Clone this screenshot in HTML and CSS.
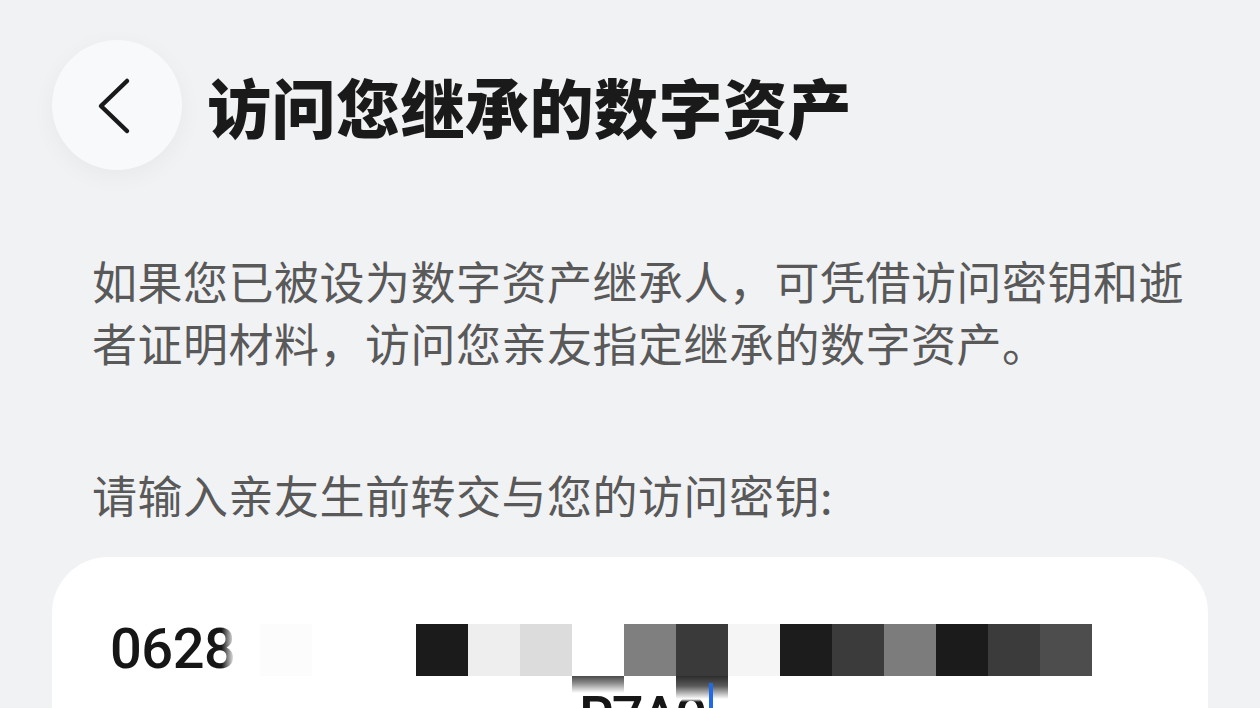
FILE: index.html
```html
<!DOCTYPE html>
<html lang="zh-CN">
<head>
<meta charset="utf-8">
<title>访问您继承的数字资产</title>
<link rel="stylesheet" href="styles.css">
</head>
<body>
<div class="page">
  <header class="header">
    <button class="back" aria-label="返回">
      <svg width="130" height="130" viewBox="0 0 130 130"><path d="M75 41 L49 66 L75 91" fill="none" stroke="#1a1a1a" stroke-width="4.5" stroke-linecap="round" stroke-linejoin="round"/></svg>
    </button>
    <h1 class="title">访问您继承的数字资产</h1>
  </header>
  <p class="desc">如果您已被设为数字资产继承人，可凭借访问密钥和逝者证明材料，访问您亲友指定继承的数字资产。</p>
  <p class="prompt">请输入亲友生前转交与您的访问密钥:</p>
  <div class="card">
    <div class="line">0628</div>
    <div class="line line2">R7A9<span class="cursor"></span></div>
    <div class="mosaic">
      <div class="mrow">
        <i class="c fade"></i><i class="c m1"></i><i class="c"></i><i class="c"></i>
        <i class="c k1b"></i><i class="c ee"></i><i class="c dc"></i><i class="c wh"></i>
        <i class="c g7f"></i><i class="c g3a"></i><i class="c f5"></i><i class="c k1c"></i>
        <i class="c g3b"></i><i class="c g7c"></i><i class="c k1b"></i><i class="c g3b"></i><i class="c g4d"></i>
      </div>
      <div class="mrow">
        <i class="c"></i><i class="c"></i><i class="c"></i><i class="c"></i>
        <i class="c"></i><i class="c"></i><i class="c"></i><i class="c gr1"></i>
        <i class="c"></i><i class="c gr2"></i>
      </div>
    </div>
  </div>
</div>
</body>
</html>
```
FILE: styles.css
```css
html, body {
  margin: 0;
  padding: 0;
}
body {
  background: #f1f2f4;
  width: 1260px;
  height: 708px;
  overflow: hidden;
  font-family: "Noto Sans CJK SC", "Noto Sans", sans-serif;
}
.page {
  display: flex;
  flex-direction: column;
}
.header {
  display: flex;
  align-items: center;
  gap: 25px;
  padding: 40px 0 0 52px;
}
.back {
  width: 130px;
  height: 130px;
  border-radius: 50%;
  border: none;
  padding: 0;
  background: #f8f9fa;
  box-shadow: 0 6px 24px rgba(0, 0, 0, 0.045);
  display: flex;
  align-items: center;
  justify-content: center;
}
.back svg {
  display: block;
}
.title {
  margin: 0;
  font-size: 64px;
  line-height: 1;
  font-weight: 900;
  color: #1a1a1a;
  letter-spacing: 0.5px;
}
.desc, .prompt {
  margin: 0 52px 0 92px;
  font-size: 45px;
  line-height: 62px;
  color: #595959;
  letter-spacing: 0.5px;
}
.desc {
  margin-top: 80px;
}
.prompt {
  margin-top: 90px;
}
.card {
  position: relative;
  margin: 31px 52px 0;
  height: 300px;
  background: #ffffff;
  border-radius: 56px;
  padding: 58px 0 0 58px;
  box-sizing: border-box;
}
.line {
  font-family: Roboto, "Noto Sans", sans-serif;
  font-size: 56px;
  font-weight: 500;
  line-height: 68px;
  color: #161616;
  letter-spacing: -0.5px;
  height: 68px;
}
.line2 {
  margin-left: 469px;
  display: flex;
  align-items: stretch;
  letter-spacing: -2.5px;
}
.cursor {
  position: relative;
  z-index: 2;
  width: 4px;
  margin-left: 4px;
  background: #1f6ae6;
}
.mosaic {
  position: absolute;
  left: 156px;
  top: 67px;
  z-index: 1;
  display: flex;
  flex-direction: column;
}
.mrow {
  display: flex;
}
.c {
  display: block;
  width: 52px;
  height: 52px;
}
.fade { background: linear-gradient(to right, rgba(255,255,255,0) 26%, #ffffff 52%); }
.wh { background: #ffffff; }
.m1 { background: #fcfcfc; }
.k1b { background: #1b1b1b; }
.k1c { background: #1c1c1c; }
.ee { background: #eeeeee; }
.dc { background: #dcdcdc; }
.g7f { background: #7f7f7f; }
.g3a { background: #3a3a3a; }
.g3b { background: #3b3b3b; }
.g7c { background: #7c7c7c; }
.g4d { background: #4d4d4d; }
.f5 { background: #f5f5f5; }
.gr1 { background: linear-gradient(to bottom, #4a4a4a 0, #8a8a8a 7px, #ffffff 17px, rgba(255,255,255,0) 20px); }
.gr2 { background: linear-gradient(to bottom, #2c2c2c 0, #5a5a5a 10px, #ffffff 23px, rgba(255,255,255,0) 26px); }
```
